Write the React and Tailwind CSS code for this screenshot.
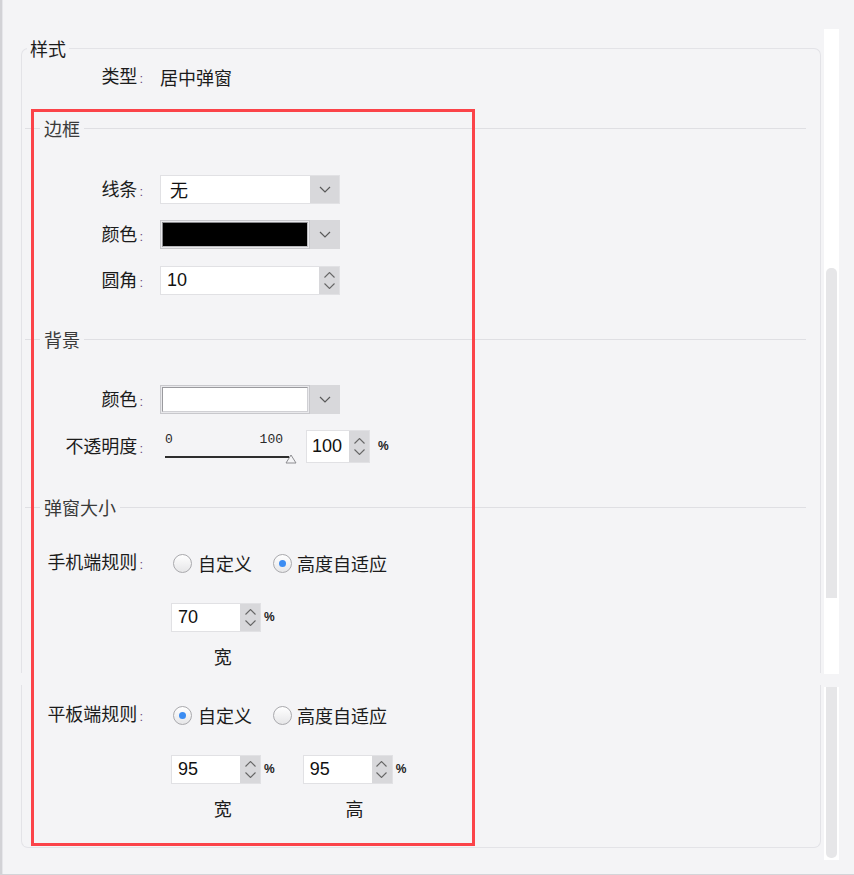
import React from "react";

const cjk = "font-['Noto_Sans_CJK_SC','Noto_Sans',sans-serif]";
const num = "font-['Liberation_Sans',Arial,sans-serif]";

const ChevronDown = () => (
  <svg width="12" height="7" viewBox="0 0 12 7" fill="none">
    <polyline points="1,1 6,6 11,1" stroke="#5a5a5a" strokeWidth="1.2" />
  </svg>
);

const Spinner = ({ w = "w-[20px]" }) => (
  <div className={`${w} h-full bg-[#d8d8db] flex flex-col items-center justify-center gap-[5px]`}>
    <svg width="11" height="6" viewBox="0 0 11 6" fill="none">
      <polyline points="0.5,5.5 5.5,0.5 10.5,5.5" stroke="#666" strokeWidth="1.1" />
    </svg>
    <svg width="11" height="6" viewBox="0 0 11 6" fill="none">
      <polyline points="0.5,0.5 5.5,5.5 10.5,0.5" stroke="#666" strokeWidth="1.1" />
    </svg>
  </div>
);

const Label = ({ children }) => (
  <div className="w-[121px] shrink-0 text-right text-[#1c1c1c] text-[18px] leading-[22px] whitespace-nowrap">
    {children}
    <span className={`${num} text-[13px] text-[#6e4c7e] ml-[2px]`}>:</span>
  </div>
);

const Section = ({ title }) => (
  <div className="flex items-center h-[20px] ml-[3px] mr-[14px]">
    <div className="w-[15px] h-px bg-[#dfdfe3]" />
    <span className="px-[4px] text-[18px] leading-[20px] text-[#3a3a3a]">{title}</span>
    <div className="flex-1 h-px bg-[#dfdfe3]" />
  </div>
);

const Radio = ({ checked }) => (
  <div className="w-[19px] h-[19px] rounded-full border border-[#a9a9ad] bg-gradient-to-b from-[#ffffff] to-[#e6e6e8] flex items-center justify-center">
    {checked && <div className="w-[7px] h-[7px] rounded-full bg-[#3b8cf2]" />}
  </div>
);

const RadioPair = ({ first }) => (
  <div className="flex items-center ml-[13px] text-[18px] leading-[22px] text-[#1c1c1c]">
    <Radio checked={first} />
    <span className="ml-[6px]">自定义</span>
    <div className="ml-[21px]">
      <Radio checked={!first} />
    </div>
    <span className="ml-[5px]">高度自适应</span>
  </div>
);

const PercentBox = ({ value, caption }) => (
  <div className="flex flex-col items-center">
    <div className="flex items-center">
      <div className="w-[90px] h-[29px] flex border border-[#e1e1e4]">
        <div className={`flex-1 bg-white ${num} text-[18px] leading-[27px] pl-[6px] text-[#111]`}>{value}</div>
        <Spinner />
      </div>
      <span className={`${num} ml-[3px] text-[12px] font-bold text-[#222] -mt-[2px]`}>%</span>
    </div>
    <div className="mt-[13px] h-[22px] text-[18px] leading-[22px] text-[#1c1c1c]">{caption}</div>
  </div>
);

export default function App() {
  return (
    <div className={`${cjk} w-[854px] h-[875px] bg-[#f4f4f6] flex relative overflow-hidden border-b border-[#d4d4d8]`}>
      {/* left edge of the window behind */}
      <div className="w-[3px] shrink-0 bg-[#d2d2d6] border-r border-[#e6e6ea]" />

      {/* main group */}
      <div className="w-[818px] shrink-0 pl-[18px] pt-[38px]">
        <fieldset className="w-[800px] border border-b-0 border-[#e3e3e7] rounded-t-[7px] pb-[6px]">
          <legend className="ml-[5px] px-[3px] text-[18px] leading-[20px] text-[#1c1c1c]">样式</legend>

          <div className="flex items-center h-[22px] mt-[8px]">
            <Label>类型</Label>
            <span className="ml-[17px] text-[18px] leading-[22px] text-[#1c1c1c]">居中弹窗</span>
          </div>

          <div className="mt-[30px]">
            <Section title="边框" />
          </div>

          <div className="flex items-center h-[29px] mt-[37px]">
            <Label>线条</Label>
            <div className="ml-[17px] w-[180px] h-[29px] flex border border-[#e1e1e4]">
              <div className="flex-1 bg-white text-[18px] leading-[27px] pl-[9px] text-[#111]">无</div>
              <div className="w-[29px] bg-[#d8d8db] flex items-center justify-center">
                <ChevronDown />
              </div>
            </div>
          </div>

          <div className="flex items-center h-[29px] mt-[16px]">
            <Label>颜色</Label>
            <div className="ml-[17px] w-[180px] h-[29px] flex">
              <div className="flex-1 bg-[#e9e9ec] border border-[#c8c8cc] p-px">
                <div className="w-full h-full bg-black border-t border-l border-[#8a8a8e] border-b border-r border-b-[#b8b8bc] border-r-[#b8b8bc]" />
              </div>
              <div className="w-[30px] bg-[#d8d8db] flex items-center justify-center">
                <ChevronDown />
              </div>
            </div>
          </div>

          <div className="flex items-center h-[29px] mt-[17px]">
            <Label>圆角</Label>
            <div className="ml-[17px] w-[180px] h-[29px] flex border border-[#e1e1e4]">
              <div className={`flex-1 bg-white ${num} text-[18px] leading-[27px] pl-[6px] text-[#111]`}>10</div>
              <Spinner />
            </div>
          </div>

          <div className="mt-[34px]">
            <Section title="背景" />
          </div>

          <div className="flex items-center h-[29px] mt-[36px]">
            <Label>颜色</Label>
            <div className="ml-[17px] w-[180px] h-[29px] flex">
              <div className="flex-1 bg-[#e9e9ec] border border-[#c8c8cc] p-px">
                <div className="w-full h-full bg-white border-t border-l border-[#9a9a9e] border-b border-r border-b-[#d0d0d4] border-r-[#d0d0d4]" />
              </div>
              <div className="w-[30px] bg-[#d8d8db] flex items-center justify-center">
                <ChevronDown />
              </div>
            </div>
          </div>

          <div className="flex items-center h-[33px] mt-[16px]">
            <Label>不透明度</Label>
            <div className="ml-[17px] w-[140px] h-[33px] flex flex-col pl-[5px]">
              <div className="flex justify-between w-[118px] font-['Liberation_Mono',monospace] text-[13px] leading-[14px] text-[#2a2a2a] mt-[3px]">
                <span>0</span>
                <span>100</span>
              </div>
              <div className="flex items-center mt-[3px]">
                <div className="w-[124px] h-[2px] bg-[#2e2e2e]" />
                <svg width="12" height="10" viewBox="0 0 12 10" className="-ml-[4px] mt-[4px]">
                  <polygon points="6,1 11,9 1,9" fill="#f4f4f6" stroke="#8c8c90" strokeWidth="1" />
                </svg>
              </div>
            </div>
            <div className="ml-[6px] w-[64px] h-[33px] flex border border-[#e1e1e4]">
              <div className={`flex-1 bg-white ${num} text-[18px] leading-[31px] pl-[5px] text-[#111]`}>100</div>
              <Spinner />
            </div>
            <span className={`${num} ml-[8px] text-[12px] font-bold text-[#222] -mt-[2px]`}>%</span>
          </div>

          <div className="mt-[34px]">
            <Section title="弹窗大小" />
          </div>

          <div className="flex items-center h-[22px] mt-[35px]">
            <Label>手机端规则</Label>
            <div className="ml-[17px]">
              <RadioPair first={false} />
            </div>
          </div>

          <div className="flex mt-[29px] pl-[149px]">
            <PercentBox value="70" caption="宽" />
          </div>
        </fieldset>

        <div className="h-[12px]" />

        <div className="w-[800px] border border-t-0 border-[#e3e3e7] rounded-b-[7px] pt-[19px] pb-[28px]">
          <div className="flex items-center h-[22px]">
            <Label>平板端规则</Label>
            <div className="ml-[17px]">
              <RadioPair first={true} />
            </div>
          </div>
          <div className="flex mt-[29px] pl-[149px] gap-[28px]">
            <PercentBox value="95" caption="宽" />
            <PercentBox value="95" caption="高" />
          </div>
        </div>
      </div>

      {/* scrollbar */}
      <div className="ml-[3px] w-[15px] pt-[29px] flex flex-col">
        <div className="h-[645px] bg-white pt-[239px] px-[2px]">
          <div className="h-[330px] bg-[#e6e6e8] rounded-t-[5px]" />
        </div>
        <div className="h-[13px]" />
        <div className="h-[173px] bg-white px-[2px] pb-[2px]">
          <div className="h-full bg-[#e6e6e8] rounded-b-[5px]" />
        </div>
      </div>

      {/* red annotation frame */}
      <div className="absolute left-[31px] top-[109px] w-[444px] h-[737px] border-[3px] border-[#fb4349] pointer-events-none" />
    </div>
  );
}
